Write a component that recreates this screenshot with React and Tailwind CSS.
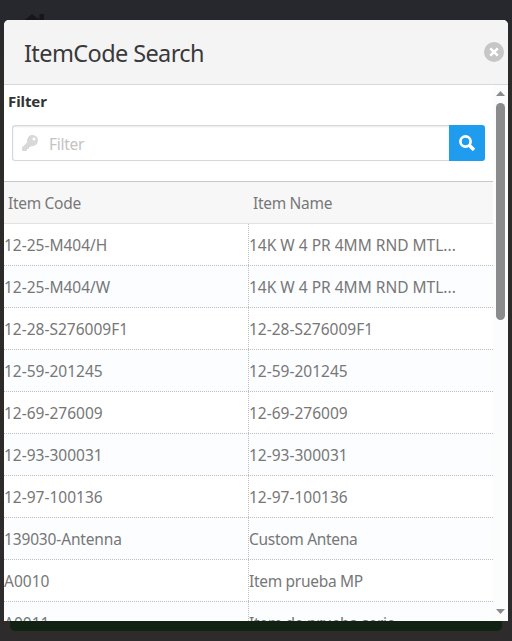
import React from "react";

const rows = [
  ["12-25-M404/H", "14K W 4 PR 4MM RND MTL..."],
  ["12-25-M404/W", "14K W 4 PR 4MM RND MTL..."],
  ["12-28-S276009F1", "12-28-S276009F1"],
  ["12-59-201245", "12-59-201245"],
  ["12-69-276009", "12-69-276009"],
  ["12-93-300031", "12-93-300031"],
  ["12-97-100136", "12-97-100136"],
  ["139030-Antenna", "Custom Antena"],
  ["A0010", "Item prueba MP"],
  ["A0011", "Item de prueba serie"],
];

// Words run slightly tighter than codes made of digits.
const tracking = (text) => {
  if (/^[A-Z][a-z]{3}/.test(text)) return "tracking-[-0.3px]";
  return /[a-z]{3}/.test(text) ? "tracking-[-0.15px]" : "tracking-normal";
};

function Header() {
  return (
    <header className="flex h-[65px] shrink-0 items-center justify-between border-b border-[#d8d8d8] bg-[#f4f4f4] pl-5 pr-1">
      <h1 className="mt-0.5 text-[23.5px] leading-8 tracking-[-0.6px] text-[#3a3a3a]">ItemCode Search</h1>
      <button className="flex size-5 items-center justify-center rounded-full bg-[#c6c6c6]" aria-label="Close">
        <svg viewBox="0 0 10 10" className="size-[10px]" stroke="#fff" strokeWidth="2.6">
          <path d="M1.2 1.4 8.8 8.6M8.8 1.4 1.2 8.6" />
        </svg>
      </button>
    </header>
  );
}

function Filter() {
  return (
    <div className="flex h-24 shrink-0 flex-col">
      <div className="h-10 pl-1 pt-1 text-[15px] font-bold leading-6 tracking-[-0.1px] text-[#333]">Filter</div>
      <div className="ml-2 mr-2 flex h-9">
        <div className="flex grow items-center rounded-l-[3px] border border-r-0 border-[#d8d8d8] pl-[9px] shadow-[inset_0_1px_2px_#e8e8e8]">
          <svg viewBox="0 0 512 512" className="size-4 fill-[#d8d8d8]">
            <path d="M512 176c0 97-79 176-176 176-11 0-22-1-32-3l-24 27a24 24 0 0 1-18 8h-38v40a24 24 0 0 1-24 24h-40v40a24 24 0 0 1-24 24H24a24 24 0 0 1-24-24v-78c0-6 3-12 7-17l162-162a176 176 0 1 1 343-55zm-176-48a48 48 0 1 0 96 0 48 48 0 0 0-96 0z" />
          </svg>
          <span className="ml-[11px] pt-1 text-[15.5px] tracking-[-0.3px] text-[#c3c3c3]">Filter</span>
        </div>
        <button className="flex w-9 items-center justify-center rounded-r-[3px] bg-[#209cee]" aria-label="Search">
          <svg viewBox="0 0 16 16" className="size-4" fill="none" stroke="#fff">
            <circle cx="6.5" cy="6.5" r="5.1" strokeWidth="2.7" />
            <path d="M10.3 10.3 15 15" strokeWidth="3.4" />
          </svg>
        </button>
      </div>
    </div>
  );
}

function Grid() {
  return (
    <div className="text-[15.5px] text-[#777]">
      <div className="grid h-[43px] grid-cols-[245px_1fr] items-center border-y border-t-[#c8c8c8] border-b-[#e2e2e2] bg-[#f7f7f7] pt-0.5 tracking-[-0.3px]">
        <span className="pl-1">Item Code</span>
        <span className="pl-1">Item Name</span>
      </div>
      {rows.map(([code, name], i) => (
        <div key={i} className="grid h-[42px] grid-cols-[245px_1fr] border-b border-dotted border-[#bdbdbd] odd:bg-[#fbfdff]">
          <span className={`flex items-center border-r border-dotted border-[#bdbdbd] pt-[3px] ${tracking(code)}`}>{code}</span>
          <span className={`flex items-center pt-[3px] ${tracking(name)}`}>{name}</span>
        </div>
      ))}
    </div>
  );
}

function Scrollbar() {
  return (
    <div className="flex w-[15px] shrink-0 flex-col items-center bg-[#fcfcfc] pt-[6px] pb-[7px]">
      <svg viewBox="0 0 9 5" className="h-[5px] w-[9px] fill-[#8b8b8b]"><path d="M4.5 0 9 5H0z" /></svg>
      <div className="mt-[7px] h-[217px] w-[9px] rounded-full bg-[#8b8b8b]" />
      <svg viewBox="0 0 9 5" className="mt-auto h-[5px] w-[9px] fill-[#8b8b8b]"><path d="M0 0h9L4.5 5z" /></svg>
    </div>
  );
}

export default function App() {
  return (
    <div className="relative h-[641px] w-[512px] overflow-hidden bg-linear-to-b from-[#27282d] from-[20px] via-[#2d2b29] via-[70px] to-[#2d2b2b] px-1 pt-5 [font-family:'Noto_Sans',sans-serif]">
      <svg viewBox="0 0 22 18" className="absolute left-6 top-[13px] h-[18px] w-[22px] fill-[#17171a]">
        <path d="M0 7.5 8 1l4.500 3.500L15.500 6V1H20v7l2 3v7H0z" />
      </svg>
      <div className="absolute left-[10px] top-[600px] h-[31px] w-[492px] rounded-b-[5px] bg-[#112213]" />
      <div className="relative flex h-[601px] flex-col overflow-hidden rounded-t-[5px] bg-white">
        <Header />
        <div className="flex min-h-0 grow">
          <div className="flex min-w-0 grow flex-col overflow-hidden">
            <Filter />
            <Grid />
          </div>
          <Scrollbar />
        </div>
      </div>
    </div>
  );
}
